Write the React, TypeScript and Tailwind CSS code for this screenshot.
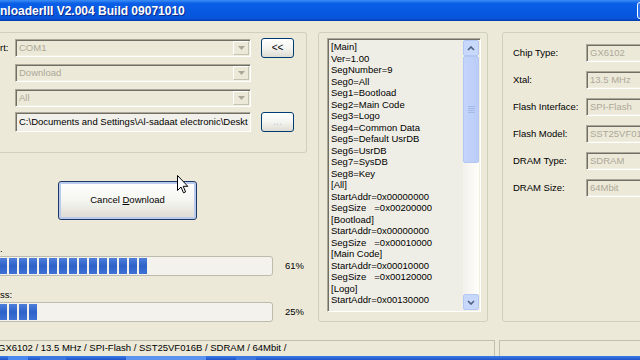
import React from "react";

const sunken =
  "border-t border-l border-b border-r border-t-[#ACA899] border-l-[#ACA899] border-b-white border-r-white shadow-[inset_1px_1px_0_#716F64,inset_-1px_-1px_0_#F1EFE2]";

function Combo({ text }: { text: string }) {
  return (
    <div className={`flex h-[18px] w-[236px] shrink-0 items-center bg-[#ECE9D8] ${sunken}`}>
      <span className="flex-1 pl-[3px] leading-none text-[#ACA899]">{text}</span>
      <div className="mr-[1px] flex h-[14px] w-[16px] items-center justify-center border border-t-white border-l-white border-b-[#C5C2B2] border-r-[#C5C2B2] bg-[#ECE9D8]">
        <svg width="7" height="4" viewBox="0 0 7 4">
          <path d="M0 0 L7 0 L3.5 4 Z" fill="#ACA899" />
        </svg>
      </div>
    </div>
  );
}

function XPButton({ children, dim }: { children: React.ReactNode; dim?: boolean }) {
  return (
    <div
      className={`flex h-[20px] w-[33px] shrink-0 items-center justify-center rounded-[3px] border border-[#003C74] bg-gradient-to-b from-white via-[#F4F4F0] to-[#DEDCD2] text-[10px] leading-none ${
        dim ? "text-[#B9C3DD]" : "text-black"
      }`}
    >
      {children}
    </div>
  );
}

function Progress({ chunks, pct }: { chunks: number; pct: string }) {
  return (
    <div className="flex h-[20px] items-center">
      <div className="-ml-[4px] flex h-[20px] w-[277px] shrink-0 items-center rounded-[3px] border border-[#BDBAAE] bg-[#F3F2EC] pl-[2px]">
        {Array.from({ length: chunks }).map((_, i) => (
          <div
            key={i}
            className="mr-[2px] h-[16px] w-[8px] shrink-0 bg-gradient-to-b from-[#4E7FDA] via-[#2C62C9] to-[#3F72D4]"
          />
        ))}
      </div>
      <span className="ml-[12px] text-black">{pct}</span>
    </div>
  );
}

const iniLines = [
  "[Main]",
  "Ver=1.00",
  "SegNumber=9",
  "Seg0=All",
  "Seg1=Bootload",
  "Seg2=Main Code",
  "Seg3=Logo",
  "Seg4=Common Data",
  "Seg5=Default UsrDB",
  "Seg6=UsrDB",
  "Seg7=SysDB",
  "Seg8=Key",
  "[All]",
  "StartAddr=0x00000000",
  "SegSize   =0x00200000",
  "[Bootload]",
  "StartAddr=0x00000000",
  "SegSize   =0x00010000",
  "[Main Code]",
  "StartAddr=0x00010000",
  "SegSize   =0x00120000",
  "[Logo]",
  "StartAddr=0x00130000",
];

const info: [string, string][] = [
  ["Chip Type:", "GX6102"],
  ["Xtal:", "13.5 MHz"],
  ["Flash Interface:", "SPI-Flash"],
  ["Flash Model:", "SST25VF016B"],
  ["DRAM Type:", "SDRAM"],
  ["DRAM Size:", "64Mbit"],
];

export default function App() {
  return (
    <div
      className="relative flex h-[360px] w-[640px] flex-col overflow-hidden bg-[#ECE9D8] text-[9.5px] text-black"
      style={{ fontFamily: '"Liberation Sans", Arial, sans-serif' }}
    >
      {/* Title bar */}
      <div className="flex h-[21px] shrink-0 items-center justify-between bg-[linear-gradient(180deg,#3C8EF6_0%,#0A5FE6_16%,#0757E0_65%,#0A55DA_88%,#0039AE_100%)]">
        <span className="text-[12px] font-bold leading-none text-white [text-shadow:1px_1px_0_#0A2A8E]">
          nloaderIII V2.004 Build 09071010
        </span>
        <div className="-mr-[18px] h-[17px] w-[21px] shrink-0 rounded-[3px] border border-white bg-[#2F74F2]" />
      </div>

      {/* Main area */}
      <div className="flex shrink-0 pt-[11px]">
        {/* Left column */}
        <div className="flex w-[307px] shrink-0 flex-col">
          <div className="flex h-[121px] flex-col rounded-r-[3px] border-t border-r border-b border-[#D0D0BF] pt-[5px]">
            <div className="flex h-[20px] items-center">
              <span className="w-[15px] shrink-0">rt:</span>
              <Combo text="COM1" />
              <div className="ml-[10px]">
                <XPButton>&lt;&lt;</XPButton>
              </div>
            </div>
            <div className="ml-[15px] mt-[6px]">
              <Combo text="Download" />
            </div>
            <div className="ml-[15px] mt-[7px]">
              <Combo text="All" />
            </div>
            <div className="ml-[15px] mt-[5px] flex items-center">
              <div className={`flex h-[20px] w-[236px] shrink-0 items-center overflow-hidden whitespace-nowrap bg-[#F1F0EA] pl-[3px] ${sunken}`}>
                C:\Documents and Settings\Al-sadaat electronic\Deskt
              </div>
              <div className="ml-[10px]">
                <XPButton dim>...</XPButton>
              </div>
            </div>
          </div>

          <div className="ml-[58px] mt-[28px] flex h-[39px] w-[139px] items-center justify-center rounded-[3px] border border-[#1C3766] bg-gradient-to-b from-white via-[#F5F5F1] to-[#DCDAD0] text-[9.5px] shadow-[inset_0_0_0_2px_#B9CAEC]">
            <span>
              Cancel <span className="underline">D</span>ownload
            </span>
          </div>

          <div className="mt-[22px] h-[14px] leading-[14px]">.</div>
          <Progress chunks={15} pct="61%" />
          <div className="mt-[12px] h-[14px] leading-[14px]">ss:</div>
          <Progress chunks={4} pct="25%" />
        </div>

        {/* Middle group */}
        <div className="ml-[11px] h-[290px] w-[170px] shrink-0 rounded-[3px] border border-[#D0D0BF] pl-[8px] pt-[5px]">
          <div className={`flex h-[274px] w-[154px] bg-[#EFEEE6] ${sunken} p-[1px]`}>
            <div className="flex-1 overflow-hidden pl-[2px] pt-[1px] leading-[11.5px] whitespace-pre">
              {iniLines.map((l, i) => (
                <div key={i}>{l}</div>
              ))}
            </div>
            <div className="flex w-[16px] shrink-0 flex-col bg-gradient-to-r from-[#F3F1EC] to-[#FEFEFB]">
              <div className="flex h-[16px] items-center justify-center rounded-[2px] border border-[#B3C7F3] bg-[#C8D8FB]">
                <svg width="8" height="5" viewBox="0 0 8 5">
                  <path d="M1 4 L4 1 L7 4" stroke="#4D6185" strokeWidth="1.6" fill="none" />
                </svg>
              </div>
              <div className="flex h-[107px] items-center justify-center rounded-[2px] border border-[#B3C7F3] bg-gradient-to-r from-[#C4D4FA] to-[#BBCDF8]">
                <div className="flex flex-col gap-[1px]">
                  <div className="h-[1px] w-[7px] bg-[#A5B9E8]" />
                  <div className="h-[1px] w-[7px] bg-[#A5B9E8]" />
                  <div className="h-[1px] w-[7px] bg-[#A5B9E8]" />
                  <div className="h-[1px] w-[7px] bg-[#A5B9E8]" />
                </div>
              </div>
              <div className="flex-1" />
              <div className="flex h-[16px] items-center justify-center rounded-[2px] border border-[#B3C7F3] bg-[#C8D8FB]">
                <svg width="8" height="5" viewBox="0 0 8 5">
                  <path d="M1 1 L4 4 L7 1" stroke="#4D6185" strokeWidth="1.6" fill="none" />
                </svg>
              </div>
            </div>
          </div>
        </div>

        {/* Right group */}
        <div className="ml-[14px] flex h-[290px] w-[170px] shrink-0 flex-col gap-[9px] rounded-[3px] border border-[#D0D0BF] pl-[10px] pt-[11px]">
          {info.map(([label, value]) => (
            <div key={label} className="flex h-[18px] items-center">
              <span className="w-[73px] shrink-0">{label}</span>
              <div className={`flex h-[18px] w-[80px] shrink-0 items-center whitespace-nowrap bg-[#ECE9D8] pl-[3px] text-[#ACA899] ${sunken}`}>
                {value}
              </div>
            </div>
          ))}
        </div>
      </div>

      {/* Status bar */}
      <div className="mt-[18px] flex h-[16px] shrink-0">
        <div className="-ml-[2px] flex w-[497px] shrink-0 items-center border-t border-r border-[#C2BFB0] pl-0 whitespace-nowrap">
          GX6102 / 13.5 MHz / SPI-Flash / SST25VF016B / SDRAM / 64Mbit /
        </div>
        <div className="ml-[4px] flex-1 border-t border-l border-[#C2BFB0]" />
      </div>

      {/* Taskbar strip */}
      <div className="flex h-[4px] shrink-0 bg-gradient-to-b from-[#3A7BE8] to-[#1F53C8]">
        <div className="ml-[8px] w-[20px] bg-[#4A8AF0]" />
        <div className="ml-[12px] w-[26px] bg-[#3C78E0]" />
        <div className="ml-[60px] w-[80px] bg-[#5B93EE]" />
        <div className="ml-[30px] w-[20px] bg-[#3C78E0]" />
      </div>

      {/* Mouse cursor */}
      <svg
        className="absolute left-[177px] top-[175px]"
        width="12"
        height="19"
        viewBox="0 0 12 19"
      >
        <path
          d="M0.5 0.5 L0.5 15.5 L4 12 L6.5 17.8 L8.6 16.9 L6.2 11.3 L10.8 11.3 Z"
          fill="white"
          stroke="black"
          strokeWidth="1"
          strokeLinejoin="miter"
        />
      </svg>
    </div>
  );
}
